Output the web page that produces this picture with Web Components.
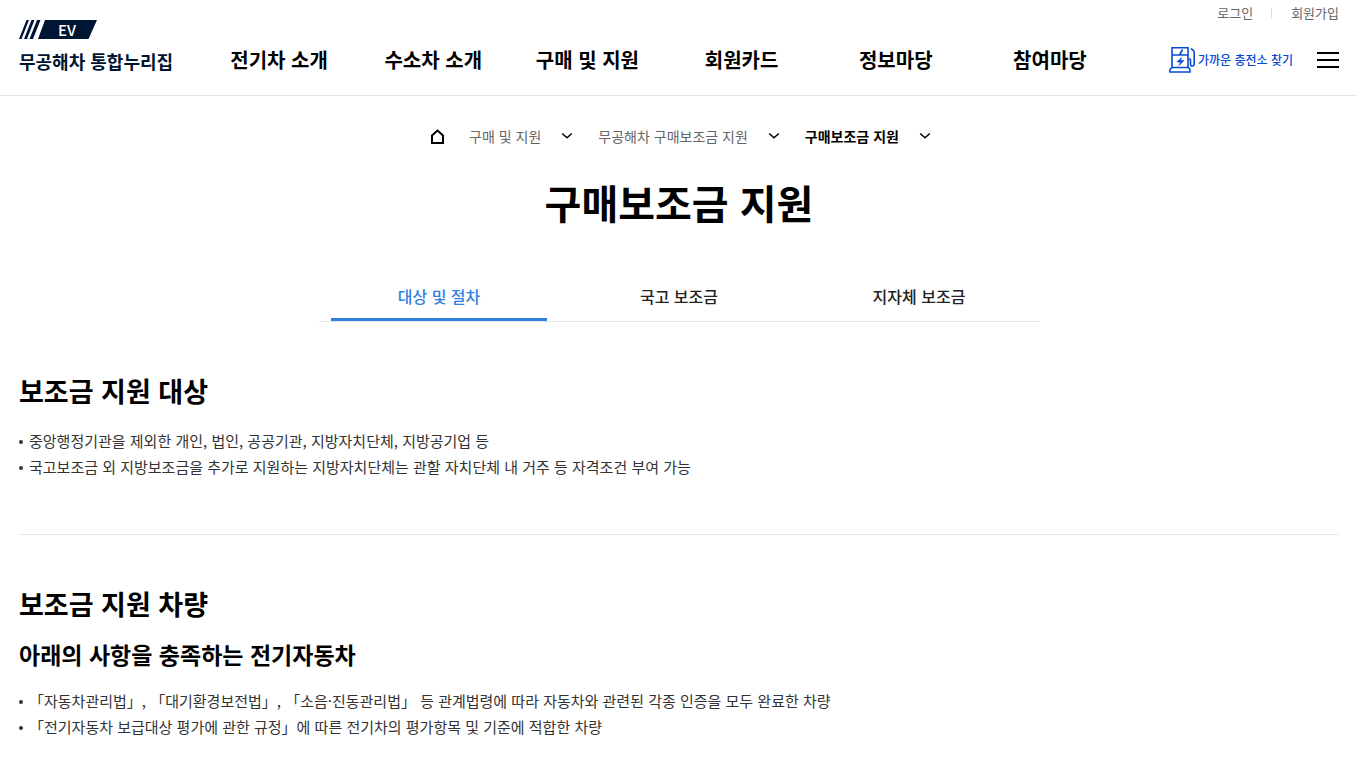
<!DOCTYPE html>
<html lang="ko">
<head>
<meta charset="utf-8">
<meta name="viewport" content="width=device-width, initial-scale=1">
<title>구매보조금 지원</title>
<style>
  body { margin: 0; background: #fff; color: #000; font-family: "Noto Sans CJK KR", "Noto Sans", sans-serif; font-size: 16px; line-height: 26px; }
</style>
</head>
<body>
<ev-page>
  <ev-header slot="header"></ev-header>
  <ev-breadcrumb></ev-breadcrumb>
  <ev-title>구매보조금 지원</ev-title>
  <ev-tabs></ev-tabs>
  <ev-section heading="보조금 지원 대상">
    <ev-list>
      <ev-item>중앙행정기관을 제외한 개인, 법인, 공공기관, 지방자치단체, 지방공기업 등</ev-item>
      <ev-item>국고보조금 외 지방보조금을 추가로 지원하는 지방자치단체는 관할 자치단체 내 거주 등 자격조건 부여 가능</ev-item>
    </ev-list>
  </ev-section>
  <ev-section heading="보조금 지원 차량" subheading="아래의 사항을 충족하는 전기자동차">
    <ev-list>
      <ev-item>「자동차관리법」, 「대기환경보전법」, 「소음·진동관리법」 등 관계법령에 따라 자동차와 관련된 각종 인증을 모두 완료한 차량</ev-item>
      <ev-item>「전기자동차 보급대상 평가에 관한 규정」에 따른 전기차의 평가항목 및 기준에 적합한 차량</ev-item>
    </ev-list>
  </ev-section>
</ev-page>

<script>
const define = (name, html, setup) => customElements.define(name, class extends HTMLElement {
  constructor() {
    super();
    this.attachShadow({ mode: 'open' }).innerHTML = html;
  }
  connectedCallback() { if (setup) setup(this, this.shadowRoot); }
});

define('ev-logo', `
  <style>
    :host { display: block; }
    a { display: block; color: #001433; text-decoration: none; font-size: 18px; line-height: 24px; font-weight: 700; white-space: nowrap; }
    .mark { display: grid; width: 78px; height: 19px; margin-bottom: 10px; }
    .mark > * { grid-area: 1 / 1; }
    .mark span { padding-left: 39px; color: #fff; font: 500 15px/19px "Noto Sans CJK KR", sans-serif; }
  </style>
  <a href="#">
    <span class="mark">
      <svg width="78" height="19" viewBox="0 0 78 19" aria-hidden="true" fill="#001433">
        <path d="M7.500 0H10L2.500 19H0ZM12.500 0H15.500L8 19H5ZM18 0H21.500L14 19H10.500ZM26 0H78L69.500 19H19Z"/>
      </svg>
      <span>EV</span>
    </span>
    무공해차 통합누리집
  </a>`);

define('ev-header', `
  <style>
    :host { display: grid; grid-template: 26px 67px / 183px 1fr 212px; padding: 0 18px 2px 19px; border-bottom: 1px solid #e5e5e5; }
    a { color: inherit; text-decoration: none; white-space: nowrap; }
    ev-logo { grid-row: 1 / 3; margin-top: 20px; }
    .user { grid-area: 1 / 3; display: flex; justify-content: flex-end; align-items: center; font-size: 13px; color: #666; }
    .user a + a { display: flex; align-items: center; }
    .user a + a::before { content: ""; width: 1px; height: 11px; margin: 0 19px 0 18px; background: #ddd; }
    nav { grid-area: 2 / 2; display: grid; grid-template-columns: repeat(6, 1fr); align-items: center; text-align: center; font-size: 20px; font-weight: 700; }
    .tools { grid-area: 2 / 3; display: flex; justify-content: flex-end; align-items: center; }
    .find { display: flex; align-items: center; gap: 3px; margin-right: 24px; font-size: 12px; font-weight: 500; color: #0a4bd6; }
    button { display: grid; gap: 5px; width: 22px; padding: 0; border: 0; background: none; }
    button i { height: 2px; background: #000; }
  </style>
  <ev-logo></ev-logo>
  <div class="user"><a href="#">로그인</a><a href="#">회원가입</a></div>
  <nav aria-label="주메뉴">
    <a href="#">전기차 소개</a><a href="#">수소차 소개</a><a href="#">구매 및 지원</a>
    <a href="#">회원카드</a><a href="#">정보마당</a><a href="#">참여마당</a>
  </nav>
  <div class="tools">
    <a class="find" href="#">
      <svg width="26" height="26" viewBox="0 0 26 26" aria-hidden="true" fill="none" stroke="#0a4bd6" stroke-width="1.600">
        <path d="M3 20.500V.800H19V20.500M3 8H19M1 25V22.500L3 20.500H19.500L21 22.500V25ZM13.500 2.500L10.500 8M19 12H20.500Q21.500 12 21.500 13V17.500Q21.500 19 23.500 19Q25.200 19 25.200 17.500V5.500Q25.200 3.500 22 1.500"/>
        <path d="M12.500 10.500L8 15H11.500L10 18.500L15 13.500H11.500Z" fill="#0a4bd6" stroke-width=".600"/>
      </svg>
      가까운 충전소 찾기
    </a>
    <button type="button" aria-label="전체메뉴"><i></i><i></i><i></i></button>
  </div>`);

define('ev-crumb', `
  <style>
    :host { display: flex; align-items: center; gap: 20px; font-size: 14px; line-height: 24px; color: #666; }
    :host([current]) { color: #000; font-weight: 700; }
    a { color: inherit; text-decoration: none; white-space: nowrap; }
    button { display: flex; padding: 0; border: 0; background: none; }
  </style>
  <a href="#"><slot></slot></a>
  <button type="button" aria-label="하위메뉴 열기">
    <svg width="12" height="8" viewBox="0 0 12 8" fill="none" stroke="#000" stroke-width="1.500"><path d="M1.200 1.500L6 5.700L10.800 1.500"/></svg>
  </button>`);

define('ev-breadcrumb', `
  <style>
    nav { display: flex; justify-content: center; align-items: center; gap: 25px; padding-left: 4px; }
    .home { display: flex; }
  </style>
  <nav aria-label="현재 위치">
    <a class="home" href="#" aria-label="홈">
      <svg width="13" height="16" viewBox="0 0 13 16" fill="none" stroke="#000" stroke-width="2"><path d="M1 7.500L6.500 2.500L12 7.500V15H1Z"/></svg>
    </a>
    <ev-crumb>구매 및 지원</ev-crumb>
    <ev-crumb>무공해차 구매보조금 지원</ev-crumb>
    <ev-crumb current>구매보조금 지원</ev-crumb>
  </nav>`);

define('ev-title', `
  <style>
    :host { display: block; margin: 25px 0 47px; }
    h1 { margin: 0; text-align: center; font-size: 40px; line-height: 58px; font-weight: 700; }
  </style>
  <h1><slot></slot></h1>`);

define('ev-tabs', `
  <style>
    nav { display: grid; grid-template-columns: repeat(3, 1fr); max-width: 720px; margin: 0 auto; border-bottom: 1px solid #e5e5e5; }
    a { margin: 0 12px; padding: 6px 0 10px; border-bottom: 3px solid transparent; text-align: center; font-weight: 500; line-height: 24px; color: #222; text-decoration: none; }
    a[aria-current] { border-color: #2f80df; color: #2f80df; }
  </style>
  <nav aria-label="탭 메뉴">
    <a href="#" aria-current="page">대상 및 절차</a><a href="#">국고 보조금</a><a href="#">지자체 보조금</a>
  </nav>`);

define('ev-section', `
  <style>
    :host { display: block; padding: 48px 0 54px; }
    :host(:not(:last-of-type)) { border-bottom: 1px solid #e5e5e5; }
    :host(:last-of-type) { padding-bottom: 24px; }
    h2 { margin: 0 0 16px; font-size: 27px; line-height: 42px; font-weight: 700; }
    h3 { margin: 0 0 17px; font-size: 23px; line-height: 34px; font-weight: 700; }
    h3[hidden] { display: none; }
    h2.lead { margin-bottom: 12px; }
  </style>
  <h2></h2><h3 hidden></h3><slot></slot>`,
  (host, root) => {
    root.querySelector('h2').textContent = host.getAttribute('heading');
    const sub = host.getAttribute('subheading');
    if (sub) {
      const h3 = root.querySelector('h3');
      h3.textContent = sub;
      h3.hidden = false;
      root.querySelector('h2').className = 'lead';
    }
  });

define('ev-list', `
  <style>:host { display: block; }</style>
  <div role="list"><slot></slot></div>`);

define('ev-item', `
  <style>
    :host { display: flex; gap: 6px; font-size: 15px; color: #333; }
    i { flex: none; width: 4px; height: 4px; margin-top: 12px; border-radius: 50%; background: #333; }
  </style>
  <i></i><span><slot></slot></span>`,
  host => host.setAttribute('role', 'listitem'));

define('ev-page', `
  <style>
    :host { display: block; }
    main { padding: 28px 18px 0 19px; }
  </style>
  <slot name="header"></slot>
  <main><slot></slot></main>`);
</script>
</body>
</html>
